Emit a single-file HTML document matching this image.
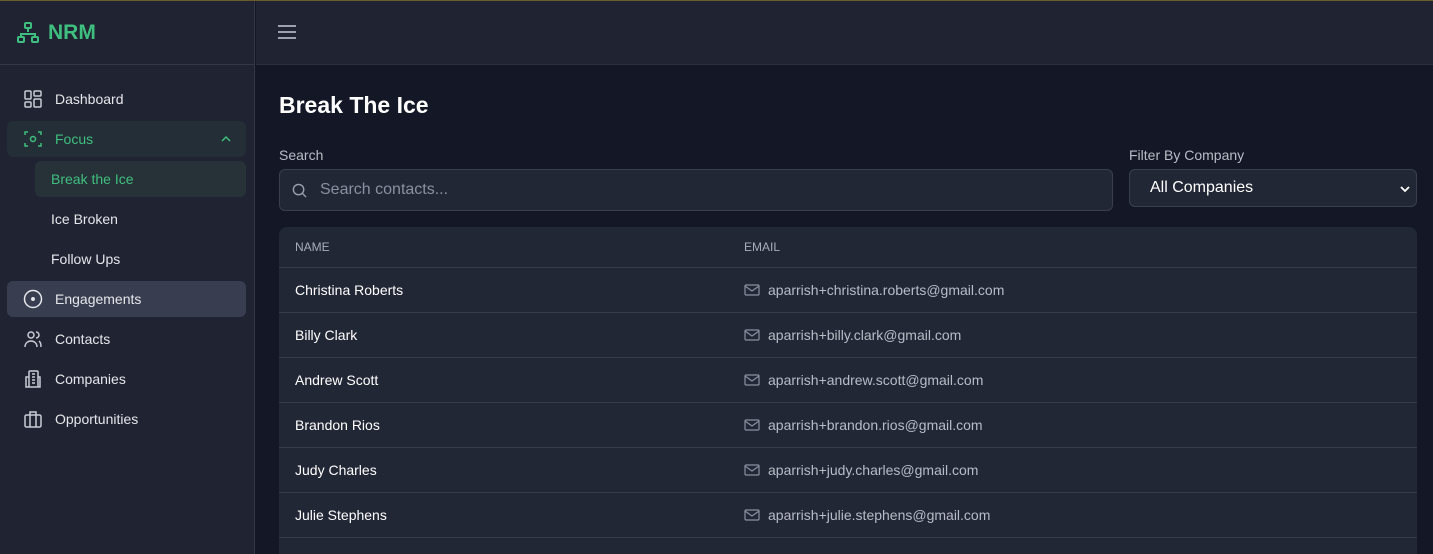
<!DOCTYPE html>
<html><head><meta charset="utf-8"><style>
*{box-sizing:border-box;margin:0;padding:0}
html,body{width:1433px;height:554px;overflow:hidden}
body{background:#141826;font-family:"Liberation Sans",sans-serif;position:relative}
.topline{position:absolute;left:0;top:0;width:1433px;height:1px;background:#6b5a2a}
.side{position:absolute;left:0;top:1px;width:255px;height:553px;background:#1f2332;border-right:1px solid #333848}
.logo{height:64px;border-bottom:1px solid #333848;display:flex;align-items:center;padding-left:16px;color:#3fbf7f;font-weight:bold;font-size:21px}
.logo svg{margin-right:8px}
.nav{padding-top:16px}
.item{height:36px;margin:0 8px 4px 7px;border-radius:6px;display:flex;align-items:center;padding-left:16px;color:#e5e7eb;font-size:14px;position:relative}
.item svg{margin-right:12px;width:20px;height:20px}
.focus{background:#242e36;color:#3fbf7f}
.sub{margin-left:35px;padding-left:16px}
.subact{background:#273238;color:#3fbf7f}
.eng{background:#383d4f}
.top{position:absolute;left:256px;top:1px;right:0;height:64px;background:#1f2332;border-bottom:1px solid #2b3040}
.main{position:absolute;left:279px;top:65px;right:16px;height:489px;overflow:hidden}
h1{color:#fff;font-size:23px;font-weight:bold;margin-top:27px}
.lbl{color:#b8bcc6;font-size:14px;position:absolute;top:82px}
.search{position:absolute;top:104px;left:0;width:834px;height:42px;border:1px solid #3a3f50;border-radius:6px;background:#222736;color:#8b90a0;font-size:16px;display:flex;align-items:center;padding-left:40px}
.sel{position:absolute;top:104px;left:850px;width:288px;height:38px;border:1px solid #3a3f50;border-radius:6px;background:#222736;color:#fff;font-size:16px;display:flex;align-items:center;padding-left:20px}
.table{position:absolute;top:162px;left:0;width:1138px;height:340px;background:#222736;border-radius:8px 8px 0 0;overflow:hidden}
.row{height:45px;border-bottom:1px solid #373c4c;display:flex;align-items:center;font-size:14px;color:#fff;position:relative}
.hd{height:41px;color:#a9adb8;font-size:12px}
.c1{position:absolute;left:16px}
.c2{position:absolute;left:465px;color:#b8bcc6;display:flex;align-items:center}
.c2 svg{margin-right:8px}
</style></head><body>
<div class="topline"></div>
<div class="side">
 <div class="logo"><svg width="24" height="24" viewBox="0 0 24 24" fill="none" stroke="#3fbf7f" stroke-width="2"><rect x="9" y="2" width="6" height="5" rx="1"/><rect x="2" y="16" width="6" height="5" rx="1"/><rect x="16" y="16" width="6" height="5" rx="1"/><path d="M12 7v4M5 16v-3h14v3"/></svg>NRM</div>
 <div class="nav">
  <div class="item"><svg viewBox="0 0 20 20" fill="none" stroke="#c9ccd4" stroke-width="1.5"><rect x="2" y="2" width="6" height="8" rx="1"/><rect x="11" y="2" width="7" height="5" rx="1"/><rect x="2" y="13" width="6" height="5" rx="1"/><rect x="11" y="10" width="7" height="8" rx="1"/></svg>Dashboard</div>
  <div class="item focus"><svg viewBox="0 0 20 20" fill="none" stroke="#3fbf7f" stroke-width="1.5"><path d="M2 6V3h3M15 3h3v3M18 14v3h-3M5 17H2v-3"/><circle cx="10" cy="10" r="2.5"/></svg>Focus<svg style="position:absolute;right:14px;width:12px;height:12px;margin:0" viewBox="0 0 12 12" fill="none" stroke="#3fbf7f" stroke-width="1.5"><path d="M2 8l4-4 4 4"/></svg></div>
  <div class="item sub subact">Break the Ice</div>
  <div class="item sub">Ice Broken</div>
  <div class="item sub">Follow Ups</div>
  <div class="item eng"><svg viewBox="0 0 20 20" fill="none" stroke="#e5e7eb" stroke-width="1.5"><circle cx="10" cy="10" r="8.5"/><circle cx="10" cy="10" r="1.2" fill="#e5e7eb"/></svg>Engagements</div>
  <div class="item"><svg viewBox="0 0 20 20" fill="none" stroke="#c9ccd4" stroke-width="1.5"><circle cx="8" cy="6" r="3"/><path d="M2 18c0-4 3-6 6-6s6 2 6 6M13 3a3 3 0 010 6M16 12c1.5 1 2 3 2 6"/></svg>Contacts</div>
  <div class="item"><svg viewBox="0 0 20 20" fill="none" stroke="#c9ccd4" stroke-width="1.5"><rect x="6" y="2" width="9" height="16" rx="1"/><path d="M6 8H3v10h3M15 8h2v10h-2M9 5h3M9 8h3M9 11h3M9 14h3"/></svg>Companies</div>
  <div class="item"><svg viewBox="0 0 20 20" fill="none" stroke="#c9ccd4" stroke-width="1.5"><rect x="2" y="6" width="16" height="12" rx="1.5"/><path d="M7 6V3h6v3M7 6v12M13 6v12"/></svg>Opportunities</div>
 </div>
</div>
<div class="top"><svg style="position:absolute;left:22px;top:23px" width="18" height="16" viewBox="0 0 18 16" stroke="#c9ccd4" stroke-width="1.6"><path d="M0 2h18M0 8h18M0 14h18"/></svg></div>
<div class="main">
 <h1>Break The Ice</h1>
 <div class="lbl" style="left:0">Search</div>
 <div class="lbl" style="left:850px">Filter By Company</div>
 <div class="search"><svg style="position:absolute;left:12px;top:13px" width="15" height="15" viewBox="0 0 16 16" fill="none" stroke="#9ca0ad" stroke-width="1.5"><circle cx="7" cy="7" r="5.5"/><path d="M11 11l4 4"/></svg>Search contacts...</div>
 <div class="sel">All Companies<svg style="position:absolute;right:6px;top:15px" width="10" height="8" viewBox="0 0 10 8" fill="none" stroke="#fff" stroke-width="1.8"><path d="M1 2l4 4 4-4"/></svg></div>
 <div class="table">
  <div class="row hd"><span class="c1">NAME</span><span class="c2" style="color:#a9adb8">EMAIL</span></div>
  <div class="row"><span class="c1">Christina Roberts</span><span class="c2"><svg width="16" height="12" viewBox="0 0 16 12" fill="none" stroke="#8b90a0" stroke-width="1.2"><rect x="1" y="1" width="14" height="10" rx="1"/><path d="M1 2l7 5 7-5"/></svg>aparrish+christina.roberts@gmail.com</span></div>
  <div class="row"><span class="c1">Billy Clark</span><span class="c2"><svg width="16" height="12" viewBox="0 0 16 12" fill="none" stroke="#8b90a0" stroke-width="1.2"><rect x="1" y="1" width="14" height="10" rx="1"/><path d="M1 2l7 5 7-5"/></svg>aparrish+billy.clark@gmail.com</span></div>
  <div class="row"><span class="c1">Andrew Scott</span><span class="c2"><svg width="16" height="12" viewBox="0 0 16 12" fill="none" stroke="#8b90a0" stroke-width="1.2"><rect x="1" y="1" width="14" height="10" rx="1"/><path d="M1 2l7 5 7-5"/></svg>aparrish+andrew.scott@gmail.com</span></div>
  <div class="row"><span class="c1">Brandon Rios</span><span class="c2"><svg width="16" height="12" viewBox="0 0 16 12" fill="none" stroke="#8b90a0" stroke-width="1.2"><rect x="1" y="1" width="14" height="10" rx="1"/><path d="M1 2l7 5 7-5"/></svg>aparrish+brandon.rios@gmail.com</span></div>
  <div class="row"><span class="c1">Judy Charles</span><span class="c2"><svg width="16" height="12" viewBox="0 0 16 12" fill="none" stroke="#8b90a0" stroke-width="1.2"><rect x="1" y="1" width="14" height="10" rx="1"/><path d="M1 2l7 5 7-5"/></svg>aparrish+judy.charles@gmail.com</span></div>
  <div class="row"><span class="c1">Julie Stephens</span><span class="c2"><svg width="16" height="12" viewBox="0 0 16 12" fill="none" stroke="#8b90a0" stroke-width="1.2"><rect x="1" y="1" width="14" height="10" rx="1"/><path d="M1 2l7 5 7-5"/></svg>aparrish+julie.stephens@gmail.com</span></div>
 </div>
</div>
</body></html>
